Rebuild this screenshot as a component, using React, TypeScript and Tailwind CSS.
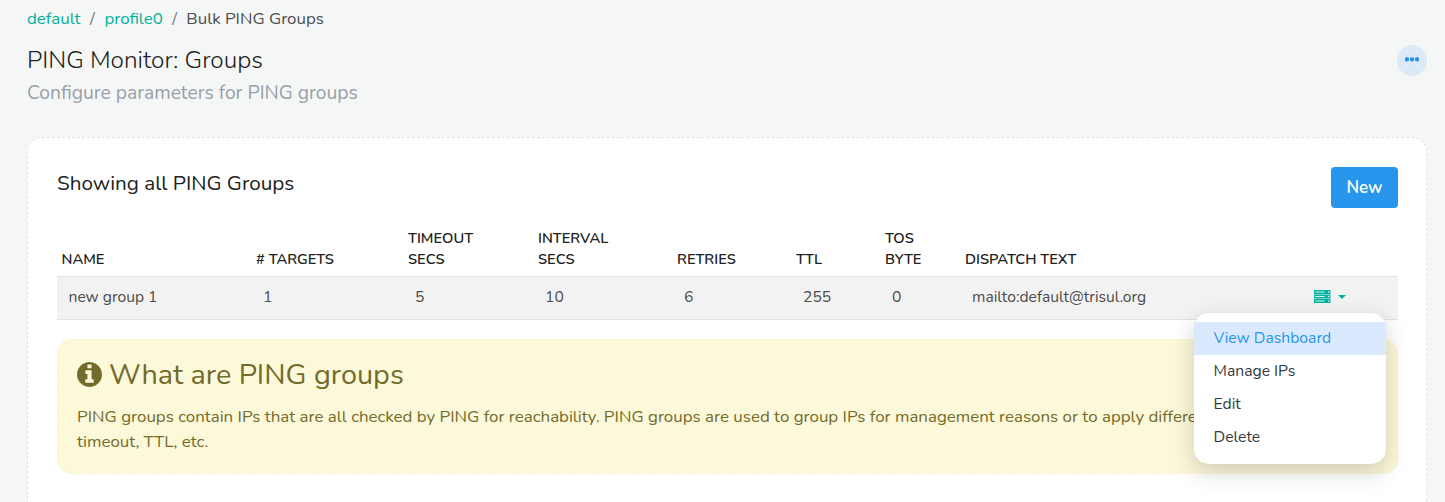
import React from "react";

const columns = [
  { label: "NAME", value: "new group 1", width: "w-[194.5px]" },
  { label: "# TARGETS", value: "1", width: "w-[152px]" },
  { label: "TIMEOUT SECS", value: "5", width: "w-[130px]" },
  { label: "INTERVAL SECS", value: "10", width: "w-[139px]" },
  { label: "RETRIES", value: "6", width: "w-[119px]" },
  { label: "TTL", value: "255", width: "w-[89px]" },
  { label: "TOS BYTE", value: "0", width: "w-[80px]" },
  { label: "DISPATCH TEXT", value: "mailto:default@trisul.org", width: "w-[342.5px]" },
];

const menuItems = ["View Dashboard", "Manage IPs", "Edit", "Delete"];

function EllipsisIcon() {
  return (
    <svg width="14" height="5" viewBox="0 0 14 5" fill="currentColor">
      <rect x="0" y="0.3" width="4" height="4.2" rx="1.4" />
      <rect x="5" y="0.3" width="4" height="4.2" rx="1.4" />
      <rect x="10" y="0.3" width="4" height="4.2" rx="1.4" />
    </svg>
  );
}

function ServerIcon() {
  return (
    <svg width="17" height="13" viewBox="0 0 17 13">
      {[0, 4.5, 9].map((y) => (
        <g key={y}>
          <rect x="0" y={y} width="16.5" height="4" rx="0.3" fill="#00b19d" />
          <rect x="1.2" y={y + 1.5} width="9.3" height="1" fill="#d9f1ee" />
          <rect x="14" y={y + 1.3} width="1.3" height="1.4" fill="#e6f5f3" />
        </g>
      ))}
    </svg>
  );
}

function InfoIcon() {
  return (
    <svg width="25" height="25" viewBox="0 0 1536 1536" fill="currentColor">
      <path d="M1024 1248v-160q0-14-9-23t-23-9h-96V544q0-14-9-23t-23-9H544q-14 0-23 9t-9 23v160q0 14 9 23t23 9h96v320h-96q-14 0-23 9t-9 23v160q0 14 9 23t23 9h448q14 0 23-9t9-23zM896 352V192q0-14-9-23t-23-9H672q-14 0-23 9t-9 23v160q0 14 9 23t23 9h192q14 0 23-9t9-23zm640 416q0 209-103 385.500T1153.500 1433 768 1536t-385.500-103T103 1153.500 0 768t103-385.500T382.500 103 768 0t385.500 103T1433 382.500 1536 768z" />
    </svg>
  );
}

function ActionMenu() {
  return (
    <div className="relative">
      <button className="ml-[11px] flex items-center pt-[2px] text-[#00b19d]">
        <ServerIcon />
        <svg className="ml-[7px]" width="8" height="4" viewBox="0 0 8 4" fill="currentColor">
          <path d="M0 0h8L4 4z" />
        </svg>
      </button>
      <div className="absolute top-[25px] right-[12px] z-10 h-[151px] w-[192px] rounded-[15px] bg-white pt-[9px] text-[15.7px] shadow-[0_8px_24px_rgba(0,0,0,0.18)]">
        {menuItems.map((item, index) => (
          <div
            key={item}
            className={
              index === 0
                ? "h-[33px] bg-[#dbe9ff] px-[19.5px] leading-[33px] text-[#2795ec]"
                : "h-[33px] px-[19.5px] leading-[33px] text-[#343a40]"
            }
          >
            {item}
          </div>
        ))}
      </div>
    </div>
  );
}

export default function App() {
  return (
    <div className="h-[502px] overflow-hidden bg-[#f5f7f6] pr-[18px] pl-[27px] font-['Nunito','Lato',sans-serif] text-[#4c4c4c]">
      <nav className="flex h-[38px] items-center text-[16.85px] leading-[24px]">
        <a className="text-[#00b19d]">default</a>
        <span className="w-[24px] text-center text-[#6c757d]">/</span>
        <a className="text-[#00b19d]">profile0</a>
        <span className="w-[23.5px] text-center text-[#6c757d]">/</span>
        <span>Bulk PING Groups</span>
      </nav>

      <header className="flex h-[99px] justify-between">
        <div className="pt-[5px]">
          <h1 className="text-[24.4px] leading-[34px] font-light text-[#212121]">PING Monitor: Groups</h1>
          <p className="text-[19.25px] leading-[32px] text-[#98a0aa]">Configure parameters for PING groups</p>
        </div>
        <button className="mt-[7px] flex h-[31px] w-[30px] items-center justify-center rounded-full bg-[#dce9f7] pb-[2px] text-[#2795ec]">
          <EllipsisIcon />
        </button>
      </header>

      <main className="h-[420px] rounded-[15px] border border-dashed border-[#e3e3e3] bg-white pt-[29px] pr-[28px] pl-[29px]">
        <div className="flex h-[60px] justify-between">
          <h2 className="pt-px text-[20.7px] leading-[30px] text-[#212121]">Showing all PING Groups</h2>
          <button className="h-[41px] w-[67px] rounded-[4px] bg-[#2795ec] text-[17px] font-semibold text-white">New</button>
        </div>

        <table className="w-full table-fixed border-collapse text-left">
          <thead>
            <tr className="h-[49px] align-bottom text-[14.65px] leading-[21px] text-[#212121]">
              {columns.map((column) => (
                <th key={column.label} className={`${column.width} pb-[6px] pl-[4.5px] font-semibold`}>
                  <div className={column.label.includes("SECS") ? "w-[80px]" : column.label === "TOS BYTE" ? "w-[50px]" : ""}>
                    {column.label}
                  </div>
                </th>
              ))}
              <th />
            </tr>
          </thead>
          <tbody>
            <tr className="h-[43px] border-y border-[#e2e2dd] bg-[#f2f2f2] text-[15.65px] leading-[22px]">
              {columns.map((column) => (
                <td key={column.label} className="pb-[2px] pl-[11.5px]">{column.value}</td>
              ))}
              <td className="pb-[4px]">
                <ActionMenu />
              </td>
            </tr>
          </tbody>
        </table>

        <section className="mt-[19px] h-[135px] rounded-[15px] border border-dashed border-[#f8f3cd] bg-[#fcf8da] px-[19px] pt-[17px] text-[#736b29]">
          <h3 className="flex h-[36px] items-center gap-[7px] text-[28.8px] leading-[36px]">
            <InfoIcon />
            <span className="font-normal">What are PING groups</span>
          </h3>
          <p className="mt-[11px] text-[16.9px] leading-[25px]">
            PING groups contain IPs that are all checked by PING for reachability. PING groups are used to group IPs for management reasons or to apply different <br />
            timeout, TTL, etc.
          </p>
        </section>
      </main>
    </div>
  );
}
